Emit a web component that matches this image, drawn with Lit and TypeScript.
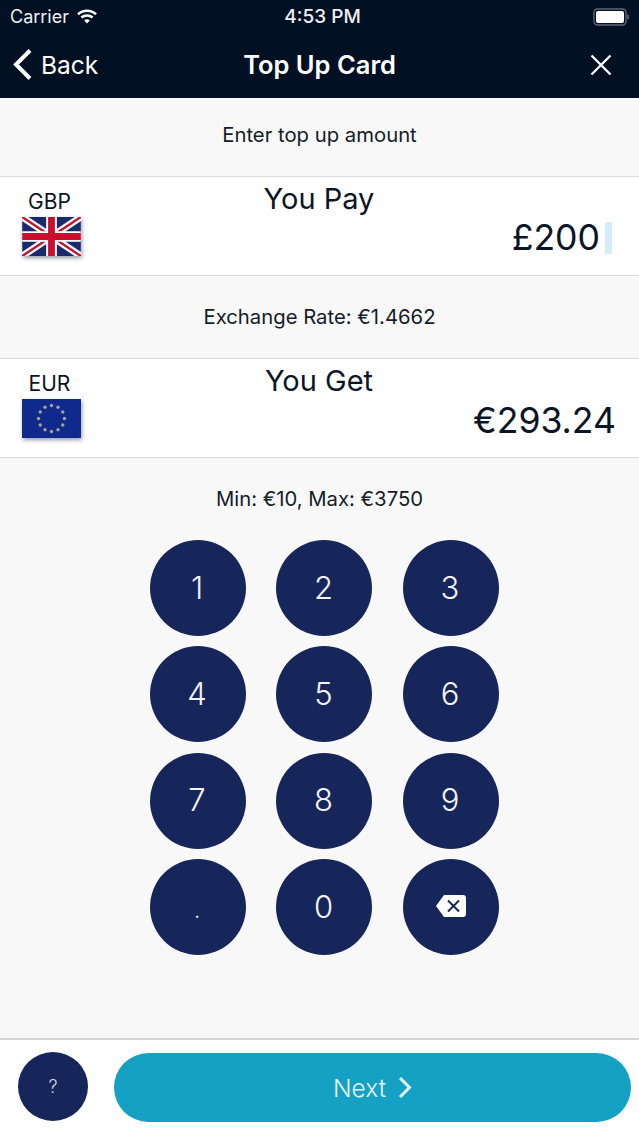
import { LitElement, html, css, svg } from 'lit';
import { customElement } from 'lit/decorators.js';

const stars = Array.from({ length: 12 }, (_, i) => {
  const a = (i * Math.PI) / 6;
  return svg`<circle cx=${29.5 + 13 * Math.sin(a)} cy=${19.5 - 13 * Math.cos(a)} r="1.7" fill="#a3a497"></circle>`;
});

const ukFlag = html`<svg class="flag" viewBox="0 0 60 40" width="59" height="39">
  <rect width="60" height="40" fill="#1b2a6b"></rect>
  <path d="M0 0L60 40M60 0L0 40" stroke="#fff" stroke-width="7"></path>
  <path d="M0 0L30 20M60 40L30 20M60 0L30 20M0 40L30 20" stroke="#c8102e" stroke-width="2.4"></path>
  <path d="M30 0V40M0 20H60" stroke="#fff" stroke-width="11"></path>
  <path d="M30 0V40M0 20H60" stroke="#c8102e" stroke-width="7"></path>
</svg>`;

const euFlag = html`<svg class="flag" viewBox="0 0 59 39" width="59" height="39">
  <rect width="59" height="39" fill="#0f2a8c"></rect>
  ${stars}
</svg>`;

@customElement('app-root')
export class AppRoot extends LitElement {
  static styles = css`
    :host {
      display: flex;
      flex-direction: column;
      height: 1136px;
      background: #f8f8f8;
      font-family: Inter, Roboto, 'Liberation Sans', sans-serif;
      color: #0b1526;
    }
    .top {
      height: 98px;
      background: #021024;
      color: #fff;
      box-sizing: border-box;
      flex: none;
    }
    .status {
      height: 33px;
      display: grid;
      grid-template-columns: 1fr auto 1fr;
      align-items: center;
      padding: 0 10px;
      font-size: 18px;
      color: #eef1f4;
    }
    .carrier {
      display: flex;
      align-items: center;
      gap: 8px;
    }
    .time {
      font-weight: 500;
      font-size: 19px;
      margin-left: 6px;
    }
    .battery {
      justify-self: end;
      display: flex;
      align-items: center;
    }
    .nav {
      height: 65px;
      box-sizing: border-box;
      padding: 0 27px 2px;
      display: grid;
      grid-template-columns: 1fr auto 1fr;
      align-items: center;
    }
    .back {
      display: flex;
      align-items: center;
      gap: 8px;
      font-size: 24.5px;
      margin-left: -15px;
    }
    .title {
      font-size: 25.5px;
      font-weight: 600;
    }
    .close {
      justify-self: end;
      display: block;
    }
    .band {
      display: flex;
      align-items: center;
      justify-content: center;
      font-size: 20.3px;
      color: #141c28;
      flex: none;
      box-sizing: border-box;
    }
    .band.one {
      height: 78px;
      padding-bottom: 6px;
    }
    .band.two {
      height: 82px;
      padding-bottom: 2px;
    }
    .row {
      flex: none;
      height: 98px;
      background: #fff;
      border-top: 1px solid #d9d9d9;
      border-bottom: 1px solid #d9d9d9;
      display: grid;
      grid-template-columns: 100px 1fr 100px;
      position: relative;
    }
    .currency {
      display: flex;
      flex-direction: column;
      align-items: center;
      padding: 13px 0 0 0;
      gap: 4px;
      font-size: 21px;
      line-height: 23px;
      width: 102px;
    }
    .code {
      margin-left: -3px;
    }
    .flag {
      display: block;
      filter: drop-shadow(1px 2px 2px rgba(20, 30, 60, 0.45));
    }
    .label {
      text-align: center;
      font-size: 29px;
      line-height: 36px;
      padding: 4px 1px 0 0;
    }
    .amount {
      position: absolute;
      right: 27px;
      top: 39px;
      display: flex;
      align-items: center;
      font-size: 35.6px;
      line-height: 44px;
    }
    .amount.get {
      right: 23px;
      top: 40px;
    }
    .caret {
      width: 7px;
      height: 32px;
      margin-left: 5px;
      background: #d4eef7;
    }
    .limits {
      flex: none;
      height: 82px;
      box-sizing: border-box;
      padding-bottom: 2px;
      display: flex;
      align-items: center;
      justify-content: center;
      font-size: 20.3px;
      color: #141c28;
    }
    .pad {
      flex: none;
      align-self: flex-start;
      margin-left: 149.5px;
      display: grid;
      grid-template-columns: repeat(3, 96px);
      grid-auto-rows: 96px;
      column-gap: 30.5px;
      row-gap: 10.4px;
    }
    .key {
      border-radius: 50%;
      background: #16265a;
      color: #f2f4f8;
      display: flex;
      align-items: center;
      justify-content: center;
      box-sizing: border-box;
      padding: 0 1px 2px 0;
      font-size: 31px;
      font-weight: 350;
    }
    .key.dot {
      font-size: 22px;
      padding: 6px 1px 0 0;
    }
    .key.erase {
      padding: 0 0 3px 1px;
    }
    .foot {
      margin-top: auto;
      flex: none;
      height: 98px;
      box-sizing: border-box;
      background: #fff;
      border-top: 2px solid #d6d6d6;
      display: flex;
      align-items: center;
      padding: 0 8px 3px 18px;
      gap: 26px;
    }
    .help {
      width: 70px;
      height: 69px;
      border-radius: 50%;
      background: #16265a;
      color: #d5d9e6;
      display: flex;
      align-items: center;
      justify-content: center;
      font-size: 18px;
      font-weight: 300;
      flex: none;
    }
    .next {
      flex: 1;
      height: 69px;
      margin-top: 2px;
      border-radius: 35px;
      background: #15a1c4;
      color: #e6f6fa;
      display: flex;
      align-items: center;
      justify-content: center;
      gap: 12px;
      font-size: 24.5px;
      font-weight: 350;
    }
  `;

  private keys = ['1', '2', '3', '4', '5', '6', '7', '8', '9', '.', '0'];

  render() {
    return html`
      <div class="top">
        <div class="status">
          <div class="carrier">
            Carrier
            <svg width="20" height="15" viewBox="0 0 20 15">
              <path d="M1 5.2C6 .6 14 .6 19 5.2" fill="none" stroke="#fff" stroke-width="2.6"></path>
              <path d="M4.4 8.6C7.6 5.8 12.4 5.8 15.6 8.6" fill="none" stroke="#fff" stroke-width="2.6"></path>
              <path d="M7.2 11.4L10 14.4L12.8 11.4C11.2 9.9 8.8 9.9 7.2 11.4Z" fill="#fff"></path>
            </svg>
          </div>
          <div class="time">4:53 PM</div>
          <div class="battery">
            <svg width="36" height="18" viewBox="0 0 36 18">
              <rect x="1" y="1" width="32" height="16" rx="3.5" fill="none" stroke="#5d6675" stroke-width="1.4"></rect>
              <rect x="3" y="3" width="28" height="12" rx="2" fill="#fff"></rect>
              <rect x="34.2" y="6.5" width="1.6" height="5" rx="0.8" fill="#5d6675"></rect>
            </svg>
          </div>
        </div>
        <div class="nav">
          <div class="back">
            <svg width="21" height="33" viewBox="0 0 21 33">
              <path d="M18 2.5L4 16.5L18 30.5" fill="none" stroke="#fff" stroke-width="4"></path>
            </svg>
            Back
          </div>
          <div class="title">Top Up Card</div>
          <svg class="close" width="22" height="22" viewBox="0 0 22 22">
            <path d="M1.5 1.5L20.5 20.5M20.5 1.5L1.5 20.5" stroke="#fff" stroke-width="2.3"></path>
          </svg>
        </div>
      </div>

      <div class="band one">Enter top up amount</div>
      <div class="row">
        <div class="currency"><span class="code">GBP</span> ${ukFlag}</div>
        <div class="label">You Pay</div>
        <div class="amount">£200<span class="caret"></span></div>
      </div>
      <div class="band two">Exchange Rate: €1.4662</div>
      <div class="row">
        <div class="currency"><span class="code">EUR</span> ${euFlag}</div>
        <div class="label">You Get</div>
        <div class="amount get">€293.24</div>
      </div>
      <div class="limits">Min: €10, Max: €3750</div>

      <div class="pad">
        ${this.keys.map((k) => html`<div class="key ${k === '.' ? 'dot' : ''}">${k}</div>`)}
        <div class="key erase">
          <svg width="32" height="24" viewBox="0 0 32 24">
            <path d="M9 1H28a3 3 0 0 1 3 3V20a3 3 0 0 1-3 3H9L1 12Z" fill="#fff"></path>
            <path d="M13 6.5L24 17.5M24 6.5L13 17.5" stroke="#16265a" stroke-width="2"></path>
          </svg>
        </div>
      </div>

      <div class="foot">
        <div class="help">?</div>
        <div class="next">
          Next
          <svg width="14" height="23" viewBox="0 0 14 23">
            <path d="M2 2L11.5 11.5L2 21" fill="none" stroke="#e6f6fa" stroke-width="3"></path>
          </svg>
        </div>
      </div>
    `;
  }
}
